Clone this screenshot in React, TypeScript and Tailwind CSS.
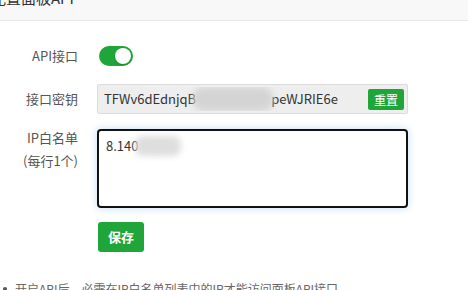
import React from "react";

export default function App() {
  const font = { fontFamily: '"Noto Sans CJK SC", "Noto Sans", sans-serif' };
  return (
    <div className="w-[468px] h-[290px] overflow-hidden bg-white relative" style={font}>
      <div className="h-[21px] bg-[#f8f8f8] border-b border-[#e8e8e8] overflow-hidden">
        <div className="-mt-[12px] -ml-[9px] text-[15px] leading-[20px] text-[#333]">配置面板API</div>
      </div>
      <div className="pt-[25px]">
        <div className="flex items-center h-[20px]">
          <div className="w-[78px] text-right text-[13px] text-[#555]">API接口</div>
          <div className="ml-[21px] w-[34px] h-[20px] rounded-full bg-[#20a53a] flex items-center justify-end pr-[2px]">
            <div className="w-[16px] h-[16px] rounded-full bg-white shadow-[0_1px_2px_rgba(0,0,0,0.2)]" />
          </div>
        </div>
        <div className="flex items-center mt-[18px] h-[30px]">
          <div className="w-[78px] text-right text-[13px] text-[#555]">接口密钥</div>
          <div className="ml-[19px] w-[311px] h-[30px] border border-[#dcdcdc] bg-[#eeeeee] rounded-[2px] flex items-center pl-[6px] pr-[3px]">
            <div className="flex-1 flex items-center text-[13px] text-[#333] overflow-hidden whitespace-nowrap">
              <span>TFWv6dEdnjqB</span>
              <span className="inline-block w-[80px] h-[24px] -ml-[3px] -mr-[2px] bg-[#d4d4d4] rounded-[10px] blur-[3px]" />
              <span>peWJRIE6e</span>
            </div>
            <button className="w-[36px] h-[21px] bg-[#20a53a] text-white text-[12px] rounded-[2px] leading-[21px]">重置</button>
          </div>
        </div>
        <div className="flex items-start mt-[15px]">
          <div className="w-[78px] text-right text-[13px] text-[#555] leading-[23px] -mt-[3px]">
            IP白名单
            <br />
            (每行1个)
          </div>
          <div className="ml-[19px] w-[311px] h-[79px] border-2 border-[#111] rounded-[4px] bg-white shadow-[0_0_8px_rgba(102,175,233,0.4)] px-[7px] pt-[5px]">
            <div className="flex items-center text-[13px] text-[#333]">
              <span>8.140</span>
              <span className="inline-block w-[46px] h-[20px] -ml-[3px] bg-[#dedede] rounded-[8px] blur-[3px]" />
            </div>
          </div>
        </div>
        <div className="mt-[14px] ml-[98px]">
          <button className="w-[46px] h-[30px] bg-[#20a53a] text-white text-[13px] font-bold rounded-[3px]">保存</button>
        </div>
        <div className="mt-[28px] flex items-center text-[12px] text-[#666] whitespace-nowrap">
          <span className="ml-[3px] mr-[8px] w-[4px] h-[4px] rounded-full bg-[#555]" />
          <span>开启API后，必需在IP白名单列表中的IP才能访问面板API接口</span>
        </div>
      </div>
    </div>
  );
}
